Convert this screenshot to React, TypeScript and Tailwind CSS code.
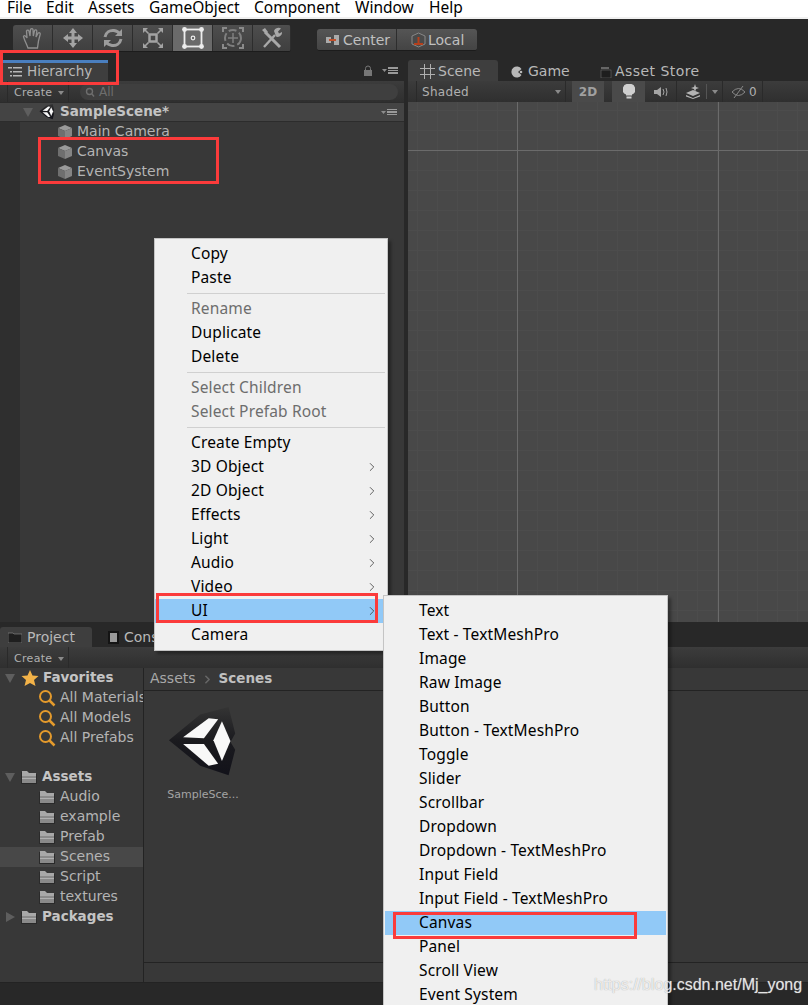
import { ChevronRight } from 'lucide-react'

const ui = "font-['DejaVu_Sans',sans-serif]"
const win = "font-['Noto_Sans','Liberation_Sans',sans-serif]"

function Cube() {
  return (
    <svg width="16" height="16" viewBox="0 0 16 16" className="shrink-0">
      <path d="M8 1 L15 4 L8 7 L1 4 Z" fill="#9a9a9a" />
      <path d="M1 4 L8 7 V15 L1 12 Z" fill="#6f6f6f" />
      <path d="M15 4 L8 7 V15 L15 12 Z" fill="#858585" />
    </svg>
  )
}

function Folder() {
  return (
    <svg width="18" height="16" viewBox="0 0 18 16" className="shrink-0">
      <path d="M1 3 H7 L9 5 H17 V15 H1 Z" fill="#2a2a2a" />
      <path d="M2 2 H7 L9 4 H16 V7 H2 Z" fill="#a8a8a8" />
      <path d="M2 7 H16 V14 H2 Z" fill="#8a8a8a" />
      <path d="M2 9 H16 V10 H2 Z" fill="#b0b0b0" />
    </svg>
  )
}

function Search() {
  return (
    <svg width="18" height="18" viewBox="0 0 18 18" className="shrink-0">
      <circle cx="7.5" cy="7.5" r="5.5" fill="none" stroke="#e49a2c" strokeWidth="2" />
      <path d="M11.5 11.5 L16.5 16.5" stroke="#e49a2c" strokeWidth="2.5" />
    </svg>
  )
}

function Arrow({ open = true }: { open?: boolean }) {
  return (
    <svg width="10" height="10" viewBox="0 0 10 10" className="shrink-0">
      {open ? <path d="M0 1 H10 L5 10 Z" fill="#5e5e5e" /> : <path d="M1 0 L10 5 L1 10 Z" fill="#5e5e5e" />}
    </svg>
  )
}

function Caret() {
  return (
    <svg width="6" height="4" viewBox="0 0 6 4" className="shrink-0">
      <path d="M0 0 H6 L3 4 Z" fill="#8a8a8a" />
    </svg>
  )
}

function Burger() {
  return (
    <div className="flex items-center gap-[1px]">
      <svg width="5" height="3" viewBox="0 0 5 3"><path d="M0 0 H5 L2.5 3 Z" fill="#8d8d8d" /></svg>
      <div className="flex flex-col gap-[1px]">
        <div className="w-[10px] h-[1.5px] bg-[#9a9a9a]" />
        <div className="w-[10px] h-[1.5px] bg-[#9a9a9a]" />
        <div className="w-[10px] h-[1.5px] bg-[#9a9a9a]" />
      </div>
    </div>
  )
}

function UnityLogo({ size, id }: { size: number; id: string }) {
  return (
    <svg width={size} height={size} viewBox="0 0 72 76">
      <defs>
        <linearGradient id={id} x1="0" y1="0" x2="0" y2="1">
          <stop offset="0" stopColor="#343434" />
          <stop offset="0.5" stopColor="#1a1a1e" />
          <stop offset="1" stopColor="#12121a" />
        </linearGradient>
      </defs>
      <path d="M0 35 L33 8 L63 0 L70 28 L65 37 L70 45 L63 72 L33 62 Z" fill={`url(#${id})`} />
      <path d="M15 32 L42 12 L52 13 L37 33 Z" fill="#f8f8f8" />
      <path d="M15 39 L37 39 L52 60 L42 62 Z" fill="#f8f8f8" />
      <path d="M47 35 L56 15 L65 36 L56 57 Z" fill="#f8f8f8" />
    </svg>
  )
}

const tools = [
  // hand
  <svg key="h" width="24" height="24" viewBox="0 0 24 24" className="stroke-[#8f8f8f] fill-none" strokeWidth="1.3">
    <path d="M7 22 C5 17 3 13 2.5 10.5 C3 9 4.5 9.5 6 12 L5.5 5 C6 3.8 7.6 4 8 5 L9 10 L9.5 3.5 C10 2.4 11.6 2.4 12 3.5 L12.3 10 L13.6 4.4 C14.3 3.4 15.6 3.8 15.8 5 L15 11 L17.2 7 C18.2 6.3 19.4 7 19.2 8.2 C18 12 17 16 16.5 22 Z" />
  </svg>,
  // move
  <svg key="m" width="24" height="24" viewBox="0 0 24 24" fill="#a3a3a3">
    <path d="M12 2 L16 7 H13.5 V10.5 H17 V8 L22 12 L17 16 V13.5 H13.5 V17 H16 L12 22 L8 17 H10.5 V13.5 H7 V16 L2 12 L7 8 V10.5 H10.5 V7 H8 Z" />
  </svg>,
  // rotate
  <svg key="r" width="24" height="24" viewBox="0 0 24 24" fill="none" stroke="#9c9c9c" strokeWidth="3">
    <path d="M4 11 C5 6 9 4 13 4.5 C16 5 18 6.5 19 8" />
    <path d="M20 13 C19 18 15 20 11 19.5 C8 19 6 17.5 5 16" />
    <path d="M21 3 V10 H14 Z M3 21 V14 H10 Z" fill="#9c9c9c" stroke="none" />
  </svg>,
  // scale
  <svg key="s" width="24" height="24" viewBox="0 0 24 24" fill="none" stroke="#a3a3a3" strokeWidth="1.6">
    <rect x="8.5" y="8.5" width="7" height="7" strokeWidth="2.5" />
    <path d="M2 7 V2 H7 Z M22 7 V2 H17 Z M2 17 V22 H7 Z M22 17 V22 H17 Z" fill="#a3a3a3" stroke="none" />
    <path d="M4 4 L7.5 7.5 M20 4 L16.5 7.5 M4 20 L7.5 16.5 M20 20 L16.5 16.5" />
  </svg>,
  // rect, selected
  <svg key="t" width="24" height="24" viewBox="0 0 24 24" fill="none" stroke="#ededed" strokeWidth="1.8">
    <rect x="3.5" y="3.5" width="17" height="17" />
    <circle cx="12" cy="12" r="1.8" strokeWidth="1.2" />
    <g fill="#ededed" stroke="none">
      <circle cx="3.5" cy="3.5" r="2.4" /><circle cx="20.5" cy="3.5" r="2.4" />
      <circle cx="3.5" cy="20.5" r="2.4" /><circle cx="20.5" cy="20.5" r="2.4" />
    </g>
  </svg>,
  // transform
  <svg key="x" width="24" height="24" viewBox="0 0 24 24" fill="none" stroke="#7f7f7f" strokeWidth="1.5">
    <circle cx="12" cy="12" r="8" strokeWidth="2" strokeDasharray="8 3" />
    <path d="M12 7 V17 M7 12 H17" />
    <path d="M1 1 H6 V3 H3 V6 H1 Z M23 1 H18 V3 H21 V6 H23 Z M1 23 H6 V21 H3 V18 H1 Z M23 23 H18 V21 H21 V18 H23 Z" fill="#8a8a8a" stroke="none" />
  </svg>,
  // tools
  <svg key="w" width="24" height="24" viewBox="0 0 24 24" fill="none" stroke="#a8a8a8" strokeWidth="2.4">
    <path d="M4 21 L15 9" />
    <path d="M5 6 L20 21" strokeWidth="3" />
    <path d="M14 5 C15 2 19 1 21 2.5 L18 5.5 L19 7.5 L22 6 C22.5 9 19 12 16 10.5 Z" fill="#a8a8a8" stroke="none" />
    <path d="M2 4 L5 2 L8 6 L6 8 Z" fill="#a8a8a8" stroke="none" />
  </svg>,
]

function TreeRow({ icon, label, bold, indent, selected }: { icon: React.ReactNode; label: string; bold?: boolean; indent: string; selected?: boolean }) {
  return (
    <div className={`h-[20px] flex items-center ${indent} ${selected ? 'bg-[#484848]' : ''}`}>
      {icon}
      <span className={`ml-[4px] pb-[2px] whitespace-nowrap ${bold ? 'text-[13.5px] font-bold text-[#c4c4c4]' : 'text-[14px] text-[#b4b4b4]'}`}>{label}</span>
    </div>
  )
}

function MenuRow({ label, disabled, more, active, sub }: { label: string; disabled?: boolean; more?: boolean; active?: boolean; sub?: boolean }) {
  return (
    <div className={`h-[24px] flex items-center justify-between pr-[8px] text-[15.5px] tracking-[0.15px] ${sub ? 'pl-[34px]' : 'pl-[36px]'} ${active ? 'bg-[#91c9f7]' : ''} ${disabled ? 'text-[#6d6d6d]' : 'text-black'}`}>
      <span>{label}</span>
      {more && <ChevronRight size={14} strokeWidth={1.3} color="#333" />}
    </div>
  )
}

function MenuSep() {
  return (
    <div className="h-[7px] pl-[32px] pr-[2px] flex items-center">
      <div className="h-[1px] w-full bg-[#d0d0d0]" />
    </div>
  )
}

const subItems = [
  'Text', 'Text - TextMeshPro', 'Image', 'Raw Image', 'Button', 'Button - TextMeshPro', 'Toggle', 'Slider',
  'Scrollbar', 'Dropdown', 'Dropdown - TextMeshPro', 'Input Field', 'Input Field - TextMeshPro', 'Canvas',
  'Panel', 'Scroll View', 'Event System',
]

export default function App() {
  return (
    <div className={`relative w-[808px] h-[1005px] overflow-hidden bg-[#282828] ${ui}`}>
      {/* Window menu */}
      <div className={`h-[17px] bg-white flex text-[15.5px] leading-[15px] text-black pl-[7px] ${win}`}>
        <span className="w-[39px]">File</span>
        <span className="w-[42px]">Edit</span>
        <span className="w-[61px]">Assets</span>
        <span className="w-[105px]">GameObject</span>
        <span className="w-[101px]">Component</span>
        <span className="w-[74px]">Window</span>
        <span>Help</span>
      </div>
      <div className="h-[2px] bg-[#f0f0f0]" />

      {/* Toolbar */}
      <div className="h-[41px] flex items-start pt-[6px] pl-[13px]">
        <div className="flex h-[27px] rounded-[3px] overflow-hidden border-b border-[#1c1c1c]">
          {tools.map((t, i) => (
            <div key={i} className={`flex items-center justify-center border-r border-[#2d2d2d] ${i === 6 ? 'w-[38px]' : 'w-[40px]'} ${i === 4 ? 'bg-[#6a6a6a]' : 'bg-gradient-to-b from-[#4e4e4e] to-[#3f3f3f]'}`}>
              {t}
            </div>
          ))}
        </div>
        <div className="ml-[26px] mt-[4px] flex h-[22px] rounded-[3px] overflow-hidden border-b border-[#1c1c1c] text-[14px] text-[#c0c0c0]">
          <div className="w-[80px] flex items-center pl-[9px] pt-[1px] gap-[4px] border-r border-[#2d2d2d] bg-gradient-to-b from-[#555] to-[#444]">
            <svg width="13" height="10" viewBox="0 0 13 10">
              <rect x="0" y="2" width="5" height="6" fill="#aaa" />
              <rect x="8" y="0" width="5" height="10" fill="#aaa" />
              <rect x="3" y="4" width="7" height="2" fill="#c2502a" />
            </svg>
            <span>Center</span>
          </div>
          <div className="w-[80px] flex items-center pl-[14px] pt-[1px] gap-[2px] bg-gradient-to-b from-[#555] to-[#444]">
            <svg width="15" height="16" viewBox="0 0 15 16">
              <path d="M7.5 1 L14 4 V12 L7.5 15 L1 12 V4 Z" fill="#4a4a4a" stroke="#888" />
              <path d="M7.5 5 V12 M3 12 H12" stroke="#b5401c" strokeWidth="2" />
            </svg>
            <span>Local</span>
          </div>
        </div>
      </div>

      {/* Hierarchy and Scene */}
      <div className="h-[562px] flex">
        <div className="w-[404px] flex flex-col bg-[#383838]">
          <div className="h-[21px] flex bg-[#282828]">
            <div className="w-[108px] border-t-[3px] border-[#4a7fbf] bg-[#3e3e3e] flex items-center pl-[8px] gap-[5px] text-[13.5px] text-[#b8b8b8]">
              <svg width="14" height="10" viewBox="0 0 14 10" fill="#b8b8b8">
                <rect x="0" y="0" width="4" height="1.5" /><rect x="5" y="0" width="9" height="1.5" />
                <rect x="2" y="4" width="2" height="1.5" /><rect x="5" y="4" width="9" height="1.5" />
                <rect x="2" y="8" width="2" height="1.5" /><rect x="5" y="8" width="9" height="1.5" />
              </svg>
              <span className="pb-[2px]">Hierarchy</span>
            </div>
            <div className="flex-1 flex items-center justify-end gap-[9px] pr-[6px]">
              <svg width="10" height="11" viewBox="0 0 10 11">
                <path d="M2.5 5 V3.5 A2.5 2.5 0 0 1 7.5 3.5 V5" fill="none" stroke="#777" />
                <rect x="1" y="5" width="8" height="6" fill="#777" />
              </svg>
              <Burger />
            </div>
          </div>
          <div className="h-[21px] flex items-center bg-gradient-to-b from-[#3c3c3c] to-[#2f2f2f]">
            <div className="ml-[7px] w-[62px] h-full flex items-center pl-[6px] pt-[3px] gap-[6px] border-x border-[#2a2a2a] text-[11px] tracking-[0.3px] text-[#b0b0b0]">
              <span>Create</span>
              <Caret />
            </div>
            <div className="ml-[11px] w-[318px] h-[16px] rounded-full bg-[#3f3f3f] flex items-center pl-[5px] text-[12px] text-[#6e6e6e]">
              <svg width="14" height="10" viewBox="0 0 14 10" fill="none" stroke="#6e6e6e" strokeWidth="1.4">
                <circle cx="4.5" cy="4.5" r="3" /><path d="M7 7 L9 9.5" />
              </svg>
              <span>All</span>
            </div>
          </div>
          <div className="h-[20px] flex items-center bg-[#444] border-y border-[#2c2c2c] pl-[23px] pr-[7px]">
            <Arrow />
            <div className="ml-[6px]"><UnityLogo size={16} id="logoSmall" /></div>
            <span className="ml-[5px] pb-[2px] text-[13.5px] font-bold text-[#c4c4c4]">SampleScene*</span>
            <div className="ml-auto"><Burger /></div>
          </div>
          <div className="flex-1 flex">
            <div className="w-[20px] bg-[#2f2f2f]" />
            <div className="flex-1">
              <TreeRow icon={<Cube />} label="Main Camera" indent="pl-[37px]" />
              <TreeRow icon={<Cube />} label="Canvas" indent="pl-[37px]" />
              <TreeRow icon={<Cube />} label="EventSystem" indent="pl-[37px]" />
            </div>
          </div>
        </div>

        <div className="w-[4px] bg-[#282828]" />

        <div className="flex-1 flex flex-col">
          <div className="h-[21px] flex text-[14px] text-[#b8b8b8]">
            <div className="w-[90px] bg-[#3e3e3e] rounded-t-[3px] flex items-center pl-[11px] pt-[2px] gap-[2px]">
              <svg width="17" height="17" viewBox="0 0 17 17" stroke="#b0b0b0" fill="none">
                <path d="M5.5 1 V16 M11.5 1 V16 M1 5.5 H16 M1 11.5 H16" />
              </svg>
              <span>Scene</span>
            </div>
            <div className="w-[102px] flex items-center pl-[13px] pt-[2px] gap-[5px]">
              <svg width="12" height="12" viewBox="0 0 12 12">
                <path d="M10.5 3 A5.5 5.5 0 1 0 10.5 9 L7 6 Z" fill="#b8b8b8" />
                <circle cx="10" cy="6" r="1.3" fill="#b8b8b8" />
              </svg>
              <span>Game</span>
            </div>
            <div className="flex items-center pt-[2px] gap-[3px]">
              <svg width="12" height="12" viewBox="0 0 12 12">
                <rect x="1" y="4" width="10" height="8" fill="#1e1e1e" stroke="#777" strokeWidth="0.5" />
                <path d="M1 1 H9 V3 H1 Z" fill="#666" />
              </svg>
              <span className="tracking-[0.45px]">Asset Store</span>
            </div>
          </div>
          <div className="h-[21px] flex bg-gradient-to-b from-[#3c3c3c] to-[#2f2f2f] text-[12px] text-[#b0b0b0]">
            <div className="ml-[8px] w-[150px] border-x border-[#2a2a2a] flex items-center justify-between pl-[5px] pr-[4px] tracking-[0.3px]">
              <span>Shaded</span>
              <Caret />
            </div>
            <div className="ml-[6px] w-[32px] bg-[#4a4a4a] flex items-center justify-center font-bold text-[#a0a0a0]">2D</div>
            <div className="ml-[8px] w-[33px] bg-[#4a4a4a] flex items-center justify-center">
              <svg width="12" height="15" viewBox="0 0 12 15" fill="#cfcfcf">
                <path d="M6 0 A5.5 5.5 0 0 1 9 10.5 V11.5 H3 V10.5 A5.5 5.5 0 0 1 6 0 Z" />
                <rect x="3.5" y="12.5" width="5" height="2" />
              </svg>
            </div>
            <div className="w-[32px] border-r border-[#2a2a2a] flex items-center justify-center">
              <svg width="16" height="12" viewBox="0 0 16 12" fill="#a4a4a4">
                <path d="M1 4 H4 L8 1 V11 L4 8 H1 Z" />
                <path d="M10 3 Q12 6 10 9 M13 2 Q15 6 13 10" fill="none" stroke="#a4a4a4" />
              </svg>
            </div>
            <div className="w-[46px] border-r border-[#2a2a2a] flex items-center pl-[9px] gap-[5px]">
              <svg width="15" height="15" viewBox="0 0 15 15" fill="#b4b4b4">
                <path d="M0 9 L7 6 L14 9 L7 12 Z" />
                <path d="M0 11 L7 14 L14 11 L14 12.5 L7 15 L0 12.5 Z" />
                <path d="M9 0 L10 3 L13 4 L10 5 L9 8 L8 5 L5 4 L8 3 Z" />
              </svg>
              <div className="w-[1px] h-[15px] bg-[#555]" />
              <Caret />
            </div>
            <div className="w-[40px] border-r border-[#2a2a2a] flex items-center pl-[8px] gap-[3px]">
              <svg width="15" height="12" viewBox="0 0 15 12" fill="none" stroke="#888">
                <path d="M1 6 Q7.5 -1 14 6 Q7.5 13 1 6 Z" />
                <path d="M12 0 L3 12" />
              </svg>
              <span>0</span>
            </div>
          </div>
          <div className="flex-1 bg-[#484848] [background-image:linear-gradient(to_right,#6b6b6b_1px,transparent_1px),linear-gradient(to_bottom,#6b6b6b_1px,transparent_1px),linear-gradient(to_right,#4c4c4c_1px,transparent_1px),linear-gradient(to_bottom,#4c4c4c_1px,transparent_1px)] [background-size:201px_100%,100%_600px,20px_100%,100%_20px] [background-position:109px_0,0_48px,9px_0,0_8px]" />
        </div>
      </div>

      <div className="h-[5px]" />

      {/* Project panel */}
      <div className="h-[378px] flex flex-col bg-[#383838]">
        <div className="h-[20px] flex bg-[#282828] text-[14px] text-[#b8b8b8]">
          <div className="w-[92px] rounded-t-[3px] bg-[#3e3e3e] flex items-center pl-[8px] gap-[5px]">
            <svg width="14" height="11" viewBox="0 0 14 11"><path d="M0 1 H5 L6 2 H14 V11 H0 Z" fill="#1f1f1f" stroke="#8d8d8d" strokeWidth="0.6" /></svg>
            <span>Project</span>
          </div>
          <div className="ml-[16px] flex items-center gap-[5px]">
            <svg width="11" height="13" viewBox="0 0 11 13">
              <rect width="11" height="13" fill="#141414" />
              <rect x="2" y="2" width="7" height="9" fill="#9a9a9a" />
            </svg>
            <span>Console</span>
          </div>
        </div>
        <div className="h-[21px] flex bg-gradient-to-b from-[#3c3c3c] to-[#2f2f2f]">
          <div className="ml-[7px] w-[62px] h-full flex items-center pl-[6px] pt-[3px] gap-[6px] border-x border-[#2a2a2a] text-[11px] tracking-[0.3px] text-[#b0b0b0]">
            <span>Create</span>
            <Caret />
          </div>
        </div>
        <div className="flex-1 flex">
          <div className="w-[144px] border-r border-[#232323] overflow-hidden">
            <TreeRow indent="pl-[5px]" bold icon={<><Arrow /><svg className="ml-[6px]" width="18" height="16" viewBox="0 0 18 16"><path d="M9 0 L11.5 5.5 L17.5 6 L13 10 L14.5 16 L9 13 L3.5 16 L5 10 L0.5 6 L6.5 5.5 Z" fill="#f2b248" /></svg></>} label="Favorites" />
            <TreeRow indent="pl-[38px]" icon={<Search />} label="All Materials" />
            <TreeRow indent="pl-[38px]" icon={<Search />} label="All Models" />
            <TreeRow indent="pl-[38px]" icon={<Search />} label="All Prefabs" />
            <div className="h-[19px]" />
            <TreeRow indent="pl-[5px]" bold icon={<><Arrow /><span className="ml-[5px]"><Folder /></span></>} label="Assets" />
            <TreeRow indent="pl-[38px]" icon={<Folder />} label="Audio" />
            <TreeRow indent="pl-[38px]" icon={<Folder />} label="example" />
            <TreeRow indent="pl-[38px]" icon={<Folder />} label="Prefab" />
            <TreeRow indent="pl-[38px]" icon={<Folder />} label="Scenes" selected />
            <TreeRow indent="pl-[38px]" icon={<Folder />} label="Script" />
            <TreeRow indent="pl-[38px]" icon={<Folder />} label="textures" />
            <TreeRow indent="pl-[5px]" bold icon={<><Arrow open={false} /><span className="ml-[5px]"><Folder /></span></>} label="Packages" />
          </div>
          <div className="flex-1 flex flex-col">
            <div className="h-[23px] border-b border-[#232323] flex items-center pl-[6px] text-[14px] text-[#a8a8a8]">
              <span className="pb-[2px]">Assets</span>
              <ChevronRight size={13} strokeWidth={3} color="#666" className="mx-[5px]" />
              <span className="pb-[2px] font-bold text-[13.5px] text-[#c0c0c0]">Scenes</span>
            </div>
            <div className="flex-1 pl-[23px] pt-[16px]">
              <div className="w-[72px] flex flex-col items-center">
                <div className="w-[72px] h-[76px]"><UnityLogo size={72} id="logoLarge" /></div>
                <span className="mt-[4px] text-[11px] text-[#a4a4a4] whitespace-nowrap">SampleSce...</span>
              </div>
            </div>
            <div className="h-[20px] border-t border-[#232323]" />
          </div>
        </div>
        <div className="h-[23px] bg-[#282828] border-t border-[#232323]" />
      </div>

      {/* Context menu */}
      <div className={`absolute left-[154px] top-[238px] w-[234px] bg-[#f0f0f0] border border-[#c4c4c4] py-[3px] shadow-[3px_3px_3px_rgba(0,0,0,0.35)] ${win}`}>
        <MenuRow label="Copy" />
        <MenuRow label="Paste" />
        <MenuSep />
        <MenuRow label="Rename" disabled />
        <MenuRow label="Duplicate" />
        <MenuRow label="Delete" />
        <MenuSep />
        <MenuRow label="Select Children" disabled />
        <MenuRow label="Select Prefab Root" disabled />
        <MenuSep />
        <MenuRow label="Create Empty" />
        <MenuRow label="3D Object" more />
        <MenuRow label="2D Object" more />
        <MenuRow label="Effects" more />
        <MenuRow label="Light" more />
        <MenuRow label="Audio" more />
        <MenuRow label="Video" more />
        <MenuRow label="UI" more active />
        <MenuRow label="Camera" />
      </div>

      {/* UI submenu, cut off by the window edge */}
      <div className={`absolute left-[383px] top-[595px] w-[285px] bg-[#f0f0f0] border border-[#c4c4c4] py-[3px] px-[1px] shadow-[3px_3px_3px_rgba(0,0,0,0.35)] ${win}`}>
        {subItems.map((s) => (
          <MenuRow key={s} label={s} active={s === 'Canvas'} sub />
        ))}
      </div>

      {/* Red annotation boxes */}
      <div className="absolute left-0 top-[50px] w-[119px] h-[35px] border-[3px] border-[#fb3b3b]" />
      <div className="absolute left-[38px] top-[137px] w-[181px] h-[47px] border-[3px] border-[#fb3b3b]" />
      <div className="absolute left-[156px] top-[593px] w-[222px] h-[30px] border-[3px] border-[#fb3b3b]" />
      <div className="absolute left-[393px] top-[912px] w-[244px] h-[27px] border-[3px] border-[#fb3b3b]" />

      {/* Watermark */}
      <div className="absolute left-[594px] top-[976px] text-[16px] leading-[18px] text-[#ffffffcc] font-['Liberation_Sans',sans-serif] whitespace-nowrap [text-shadow:0_0_1px_#999]">
        https://blog.csdn.net/Mj_yong
      </div>
    </div>
  )
}
